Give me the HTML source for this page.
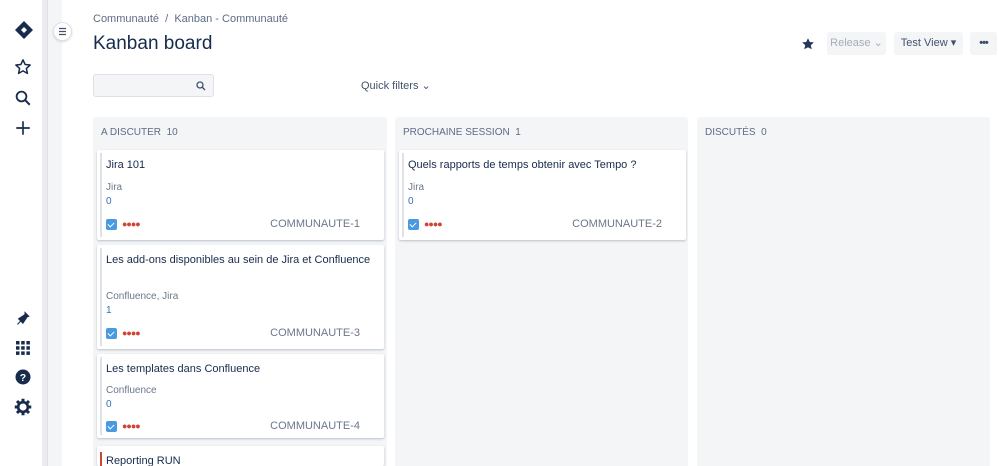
<!DOCTYPE html>
<html style="width:999px;height:466px;overflow:hidden"><head><meta charset="utf-8"><style>
*{box-sizing:border-box;margin:0;padding:0}
body{width:999px;height:466px;overflow:hidden;background:#fff;font-family:"Liberation Sans",sans-serif;position:relative;color:#172b4d}
.side{position:absolute;left:0;top:0;width:42px;height:466px;background:#fff}
.strip{position:absolute;left:42px;top:0;width:20px;height:466px;background:#f4f5f7;border-left:6px solid #ebecf0}
.strip2{position:absolute;left:47px;top:0;width:1px;height:466px;background:#dfe1e6}
.ic{position:absolute;left:14px}
.toggle{position:absolute;left:53px;top:22px;width:19px;height:19px;border-radius:50%;background:#fff;border:1px solid #dfe1e6;box-shadow:0 1px 2px rgba(0,0,0,.15)}
.abs{position:absolute}
.col{position:absolute;top:117px;height:349px;background:#f4f5f7;border-radius:3px 3px 0 0}
.ch{position:absolute;left:8px;top:10px;font-size:10px;color:#5e6c84}
.card{position:absolute;background:#fff;border-radius:2px;box-shadow:0 1px 2px rgba(9,30,66,.25);border-left:3px solid #fff}
.card:before{content:"";position:absolute;left:0;top:3px;bottom:3px;width:2px;background:#dfe1e6}
.card.red:before{background:#d04437;top:6px;bottom:0}
.t{position:absolute;left:6px;top:9px;font-size:11px;color:#172b4d}
.l{position:absolute;left:6px;font-size:10px;color:#6b778c}
.n{position:absolute;left:6px;font-size:10px;color:#3572b0}
.cb{position:absolute;left:6px;width:11px;height:11px;background:#4a9ae1;border-radius:2px}
.cb:after{content:"";position:absolute;left:3px;top:1.5px;width:3px;height:5px;border:solid #fff;border-width:0 1.5px 1.5px 0;transform:rotate(45deg)}
.dots{position:absolute;left:22px;font-size:9px;color:#d04437;letter-spacing:-1px;font-weight:bold}
.key{position:absolute;right:24px;font-size:11px;color:#6b778c}
.btn{position:absolute;top:32px;height:23px;border-radius:3px;background:#f4f5f7;font-size:11px;line-height:23px;text-align:center}
</style></head><body>
<div class="side"></div>
<div class="strip"></div><div class="strip2"></div>
<svg class="ic" style="top:20px" width="20" height="20" viewBox="0 0 20 20"><path d="M10 1L19 10L10 19L1 10Z" fill="#172b4d"/><path d="M10 7L13 10L10 13L7 10Z" fill="#fff"/></svg>
<svg class="ic" style="top:58px" width="18" height="18" viewBox="0 0 24 24"><path d="M12 2.5l2.9 6.2 6.6.7-5 4.5 1.4 6.6L12 17.2l-5.9 3.3 1.4-6.6-5-4.5 6.6-.7z" fill="none" stroke="#172b4d" stroke-width="2" stroke-linejoin="round"/></svg>
<svg class="ic" style="top:89px" width="18" height="18" viewBox="0 0 24 24"><circle cx="10" cy="10" r="6.5" fill="none" stroke="#172b4d" stroke-width="2.4"/><path d="M15 15l6 6" stroke="#172b4d" stroke-width="2.6"/></svg>
<svg class="ic" style="top:119px" width="18" height="18" viewBox="0 0 24 24"><path d="M12 3v18M3 12h18" stroke="#172b4d" stroke-width="2.2"/></svg>
<svg class="ic" style="top:309px" width="18" height="18" viewBox="0 0 24 24"><path d="M14 3l7 7-3 1-4 6-2 3-3-3-4 4-1-1 4-4-3-3 3-2 6-4z" fill="#172b4d"/></svg>
<svg class="ic" style="top:339px" width="18" height="18" viewBox="0 0 18 18" fill="#172b4d"><rect x="2" y="2" width="3.5" height="3.5"/><rect x="7.2" y="2" width="3.5" height="3.5"/><rect x="12.4" y="2" width="3.5" height="3.5"/><rect x="2" y="7.2" width="3.5" height="3.5"/><rect x="7.2" y="7.2" width="3.5" height="3.5"/><rect x="12.4" y="7.2" width="3.5" height="3.5"/><rect x="2" y="12.4" width="3.5" height="3.5"/><rect x="7.2" y="12.4" width="3.5" height="3.5"/><rect x="12.4" y="12.4" width="3.5" height="3.5"/></svg>
<svg class="ic" style="top:368px" width="18" height="18" viewBox="0 0 24 24"><circle cx="12" cy="12" r="10" fill="#172b4d"/><text x="12" y="17" font-size="14" font-weight="bold" fill="#fff" text-anchor="middle" font-family="Liberation Sans">?</text></svg>
<svg class="ic" style="top:398px" width="18" height="18" viewBox="0 0 24 24"><circle cx="12" cy="12" r="6.5" fill="none" stroke="#172b4d" stroke-width="3.5"/><g stroke="#172b4d" stroke-width="4"><path d="M12 1v5M12 18v5M1 12h5M18 12h5M4 4l3.5 3.5M16.5 16.5L20 20M4 20l3.5-3.5M16.5 7.5L20 4"/></g></svg>
<div class="toggle"><svg width="17" height="17" viewBox="0 0 17 17" style="position:absolute;left:0;top:0"><path d="M5 5.5h7M5 8.5h7M5 11.5h7" stroke="#42526e" stroke-width="1.2"/></svg></div>

<div class="abs" style="left:93px;top:13px;font-size:11px;color:#5e6c84">Communauté &nbsp;/&nbsp; Kanban - Communauté</div>
<div class="abs" style="left:93px;top:33px;font-size:19px;color:#172b4d">Kanban board</div>

<svg class="abs" style="left:801px;top:37px" width="14" height="14" viewBox="0 0 24 24"><path d="M12 2l3 6.5 7 .8-5.2 4.8 1.5 7L12 17.5 5.7 21l1.5-7L2 9.3l7-.8z" fill="#253858"/></svg>
<div class="btn" style="left:827px;width:59px;color:#a5adba">Release ⌄</div>
<div class="btn" style="left:894px;width:69px;color:#42526e">Test View ▾</div>
<div class="btn" style="left:970px;width:27px;color:#42526e;font-weight:bold;letter-spacing:-1px">•••</div>

<div class="abs" style="left:93px;top:74px;width:121px;height:23px;background:#f4f5f7;border:1px solid #dfe1e6;border-radius:3px"><svg style="position:absolute;right:7px;top:6px" width="10" height="10" viewBox="0 0 10 10"><circle cx="4" cy="4" r="3" fill="none" stroke="#42526e" stroke-width="1.3"/><path d="M6.3 6.3L9 9" stroke="#42526e" stroke-width="1.4"/></svg></div>
<div class="abs" style="left:361px;top:79px;font-size:11px;color:#42526e">Quick filters ⌄</div>

<div class="col" style="left:93px;width:294px"><div class="ch">A DISCUTER &nbsp;10</div></div>
<div class="col" style="left:395px;width:293px"><div class="ch">PROCHAINE SESSION &nbsp;1</div></div>
<div class="col" style="left:697px;width:293px"><div class="ch">DISCUTÉS &nbsp;0</div></div>

<div class="card" style="left:97px;top:150px;width:287px;height:90px">
<div class="t">Jira 101</div><div class="l" style="top:32px">Jira</div><div class="n" style="top:46px">0</div>
<div class="cb" style="top:69px"></div><div class="dots" style="top:69px">●●●●</div><div class="key" style="top:68px">COMMUNAUTE-1</div></div>

<div class="card" style="left:97px;top:245px;width:287px;height:104px">
<div class="t">Les add-ons disponibles au sein de Jira et Confluence</div><div class="l" style="top:46px">Confluence, Jira</div><div class="n" style="top:60px">1</div>
<div class="cb" style="top:83px"></div><div class="dots" style="top:83px">●●●●</div><div class="key" style="top:82px">COMMUNAUTE-3</div></div>

<div class="card" style="left:97px;top:354px;width:287px;height:84px">
<div class="t">Les templates dans Confluence</div><div class="l" style="top:31px">Confluence</div><div class="n" style="top:45px">0</div>
<div class="cb" style="top:67px"></div><div class="dots" style="top:67px">●●●●</div><div class="key" style="top:66px">COMMUNAUTE-4</div></div>

<div class="card red" style="left:97px;top:446px;width:287px;height:20px">
<div class="t" style="top:9px">Reporting RUN</div></div>

<div class="card" style="left:399px;top:150px;width:287px;height:90px">
<div class="t">Quels rapports de temps obtenir avec Tempo ?</div><div class="l" style="top:32px">Jira</div><div class="n" style="top:46px">0</div>
<div class="cb" style="top:69px"></div><div class="dots" style="top:69px">●●●●</div><div class="key" style="top:68px">COMMUNAUTE-2</div></div>
</body></html>
